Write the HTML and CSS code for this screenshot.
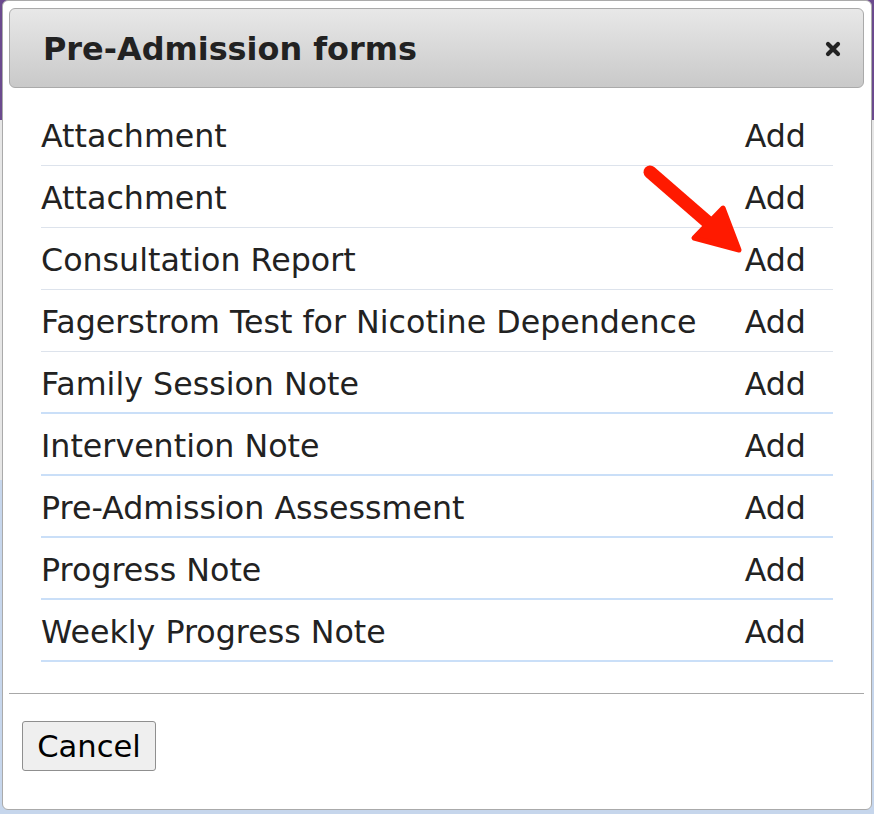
FILE: index.html
```html
<!DOCTYPE html>
<html lang="en">
<head>
    <meta charset="utf-8">
    <title>Pre-Admission forms</title>
    <link rel="stylesheet" href="styles.css">
</head>
<body>
    <div class="dialog">
        <div class="titlebar">
            <h1>Pre-Admission forms</h1>
            <button class="close" title="Close">
                <svg width="16" height="16" viewBox="0 0 16 16">
                    <path d="M3 3 L13 13 M13 3 L3 13" stroke="#222" stroke-width="4.2" stroke-linecap="round"/>
                </svg>
            </button>
        </div>
        <div class="content">
            <div class="form-row"><span>Attachment</span><a href="#">Add</a></div>
            <div class="form-row"><span>Attachment</span><a href="#">Add</a></div>
            <div class="form-row"><span>Consultation Report</span><a href="#">Add</a></div>
            <div class="form-row"><span>Fagerstrom Test for Nicotine Dependence</span><a href="#">Add</a></div>
            <div class="form-row done"><span>Family Session Note</span><a href="#">Add</a></div>
            <div class="form-row done"><span>Intervention Note</span><a href="#">Add</a></div>
            <div class="form-row done"><span>Pre-Admission Assessment</span><a href="#">Add</a></div>
            <div class="form-row done"><span>Progress Note</span><a href="#">Add</a></div>
            <div class="form-row done"><span>Weekly Progress Note</span><a href="#">Add</a></div>
        </div>
        <div class="buttonpane">
            <button class="cancel">Cancel</button>
        </div>
        <!-- annotation arrow -->
        <svg class="arrow" width="874" height="300" viewBox="0 0 874 300">
            <line x1="650" y1="172" x2="726" y2="238" stroke="#ff1a00" stroke-width="13" stroke-linecap="round"/>
            <polygon points="739,250 723,208 694,238" fill="#ff1a00" stroke="#ff1a00" stroke-width="5" stroke-linejoin="round"/>
        </svg>
    </div>
</body>
</html>
```

FILE: styles.css
```css
body {
    margin: 0;
    padding: 0;
    font-family: "DejaVu Sans", Verdana, sans-serif;
    background: linear-gradient(#6b4a8e 0, #6b4a8e 120px, #e6e6e6 120px, #e6e6e6 480px, #c6d6ec 480px);
    height: 814px;
    overflow: hidden;
}
.dialog {
    position: relative;
    margin: 0 2px;
    height: 810px;
    box-sizing: border-box;
    background-color: white;
    border: 1px solid #aaa;
    border-radius: 6px;
    padding: 7px 7px 7px 6px;
}
.titlebar {
    height: 80px;
    box-sizing: border-box;
    border: 1px solid #aaa;
    border-radius: 6px;
    background: linear-gradient(#e8e8e8, #c9c9c9);
    display: flex;
    align-items: center;
    justify-content: space-between;
    padding: 2px 22px 0 33px;
}
.titlebar h1 {
    margin: 0;
    font-size: 31.9px;
    font-weight: bold;
    color: #222;
}
.close {
    border: none;
    background: none;
    padding: 0;
    display: flex;
}
.content {
    padding: 16px 31px 0 32px;
}
.form-row {
    height: 62px;
    box-sizing: border-box;
    display: flex;
    align-items: center;
    justify-content: space-between;
    padding: 3px 27px 0 0;
    font-size: 31.7px;
    color: #222;
    border-bottom: 1px solid #dde3ec;
}
.form-row.done {
    border-bottom: 2px solid #cadff8;
}
.form-row a {
    color: #222;
    text-decoration: none;
}
.buttonpane {
    margin-top: 31px;
    border-top: 1px solid #a8a8a8;
    padding: 27px 13px;
}
.cancel {
    font-family: "DejaVu Sans", Verdana, sans-serif;
    font-size: 30.6px;
    color: black;
    height: 50px;
    width: 134px;
    background-color: #efefef;
    border: 1px solid #8f8f8f;
    border-radius: 3px;
    padding: 0;
}
.arrow {
    position: absolute;
    left: -3px;
    top: -1px;
    pointer-events: none;
}
```
